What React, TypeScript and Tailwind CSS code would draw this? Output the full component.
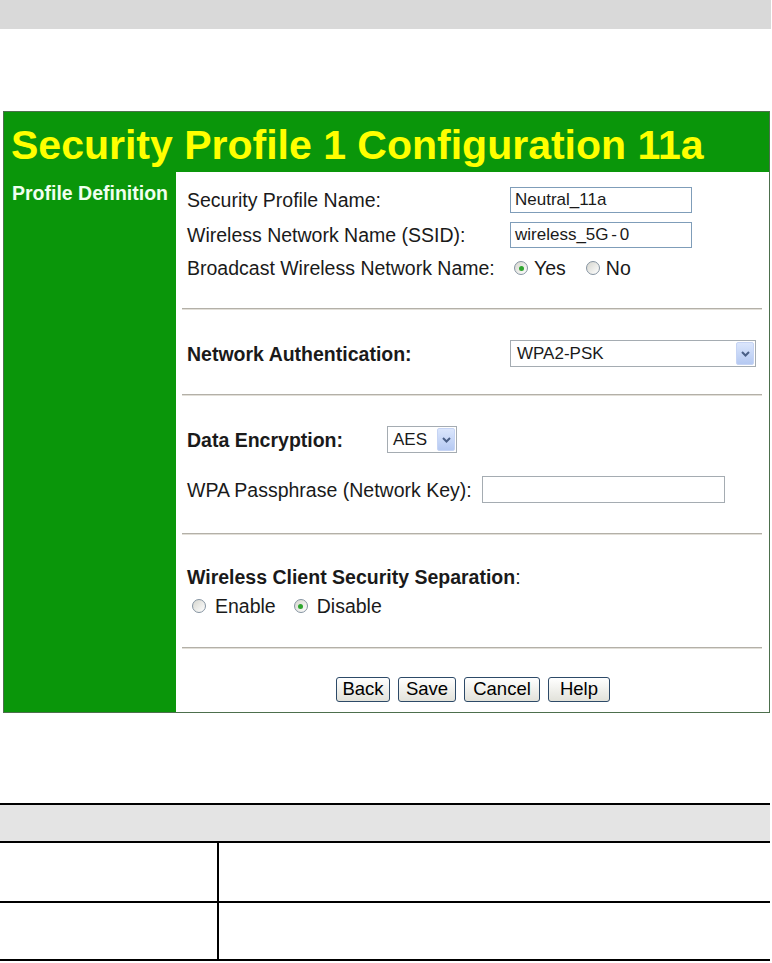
import React from "react";

const Radio = ({ checked }: { checked?: boolean }) => (
  <span className="inline-flex h-[14px] w-[14px] shrink-0 items-center justify-center rounded-full border border-[#8593a1] bg-linear-to-br from-[#d6d6cf] to-white">
    {checked && <span className="h-[5px] w-[5px] rounded-full bg-[#2ea52e]" />}
  </span>
);

const Arrow = () => (
  <span className="flex h-full w-[18px] items-center justify-center rounded-[2px] border border-[#c6d4f4] bg-linear-to-b from-[#dbe6fc] to-[#b5c9f2]">
    <svg width="9" height="6" viewBox="0 0 9 6">
      <path d="M1 1 L4.5 4.5 L8 1" stroke="#4a5f86" strokeWidth="2" fill="none" />
    </svg>
  </span>
);

const Hr = () => (
  <div className="h-[2px] border-t border-b border-t-[#b3b0a8] border-b-[#e2dfd8]" />
);

const Btn = ({ label, w }: { label: string; w: string }) => (
  <button
    className={`h-[25px] ${w} rounded-[3px] border border-[#2d4a68] bg-linear-to-b from-white to-[#e2e2da] text-[18.5px] leading-none text-black`}
  >
    {label}
  </button>
);

export default function App() {
  return (
    <div className="relative h-[963px] w-[772px] overflow-hidden bg-white font-['Liberation_Sans',Arial,sans-serif] text-[#1a1a1a]">
      <div className="h-[29px] w-[771px] bg-[#d9d9d9]" />
      <div className="h-[82px]" />
      <div className="ml-[3px] w-[767px] border border-[#4d6f4d] bg-[#0a960a]">
        <div className="pl-[7px] pt-[13px] pb-[6px] text-[41px] font-bold leading-[41px] whitespace-nowrap text-[#ffff00]">
          Security Profile 1 Configuration 11a
        </div>
        <div className="flex">
          <div className="w-[172px] shrink-0 pl-[8px] pt-[10px] text-[19.5px] font-bold leading-[22px] text-[#f0fff0]">
            Profile Definition
          </div>
          <div className="flex-1 bg-white pl-[6px] pr-[7px] text-[19.5px] leading-[22px]">
            {/* section 1 */}
            <div className="pl-[5px] pt-[15px]">
              <div className="flex h-[26px] items-center">
                <span className="w-[323px] shrink-0">Security Profile Name:</span>
                <div className="flex h-[26px] w-[182px] items-center border border-[#7f9db9] pl-[4px] text-[17px]">
                  Neutral_11a
                </div>
              </div>
              <div className="mt-[9px] flex h-[26px] items-center">
                <span className="w-[323px] shrink-0">Wireless Network Name (SSID):</span>
                <div className="flex h-[26px] w-[182px] items-center border border-[#7f9db9] pl-[4px] text-[17px] [word-spacing:-2px]">
                  wireless_5G - 0
                </div>
              </div>
              <div className="mt-[7px] flex h-[26px] items-center">
                <span className="w-[323px] shrink-0 whitespace-nowrap">Broadcast Wireless Network Name:</span>
                <span className="ml-[4px] flex items-center gap-[6px]">
                  <Radio checked />
                  <span>Yes</span>
                </span>
                <span className="ml-[20px] flex items-center gap-[6px]">
                  <Radio />
                  <span>No</span>
                </span>
              </div>
            </div>
            <div className="mt-[27px]">
              <Hr />
            </div>
            {/* section 2 */}
            <div className="pl-[5px] pt-[30px]">
              <div className="flex h-[27px] items-center">
                <span className="w-[323px] shrink-0 font-bold">Network Authentication:</span>
                <div className="flex h-[27px] w-[246px] items-center border border-[#a5acb2] p-[1px] pl-[6px] text-[17px]">
                  <span className="flex-1">WPA2-PSK</span>
                  <Arrow />
                </div>
              </div>
            </div>
            <div className="mt-[27px]">
              <Hr />
            </div>
            {/* section 3 */}
            <div className="pl-[5px] pt-[30px]">
              <div className="flex h-[27px] items-center">
                <span className="w-[200px] shrink-0 font-bold">Data Encryption:</span>
                <div className="flex h-[27px] w-[70px] items-center border border-[#a5acb2] p-[1px] pl-[5px] text-[17px]">
                  <span className="flex-1">AES</span>
                  <Arrow />
                </div>
              </div>
              <div className="mt-[23px] flex h-[27px] items-center">
                <span className="w-[295px] shrink-0 whitespace-nowrap">WPA Passphrase (Network Key):</span>
                <div className="h-[27px] w-[243px] border border-[#a5acb2]" />
              </div>
            </div>
            <div className="mt-[30px]">
              <Hr />
            </div>
            {/* section 4 */}
            <div className="pl-[5px] pt-[31px]">
              <div className="h-[22px]">
                <span className="font-bold">Wireless Client Security Separation</span>:
              </div>
              <div className="mt-[7px] flex h-[22px] items-center">
                <span className="ml-[5px] flex items-center gap-[9px]">
                  <Radio />
                  <span>Enable</span>
                </span>
                <span className="ml-[18px] flex items-center gap-[9px]">
                  <Radio checked />
                  <span>Disable</span>
                </span>
              </div>
            </div>
            <div className="mt-[30px]">
              <Hr />
            </div>
            <div className="flex justify-center gap-[8px] pt-[28px] pb-[10px] pl-[2px]">
              <Btn label="Back" w="w-[54px]" />
              <Btn label="Save" w="w-[58px]" />
              <Btn label="Cancel" w="w-[76px]" />
              <Btn label="Help" w="w-[62px]" />
            </div>
          </div>
        </div>
      </div>
      <div className="h-[90px]" />
      <div className="w-[770px] border-t-2 border-black">
        <div className="h-[36px] bg-[#e4e4e4]" />
        <div className="flex h-[60px] border-t-2 border-black">
          <div className="w-[219px] border-r-2 border-black" />
          <div className="flex-1" />
        </div>
        <div className="flex h-[60px] border-t-2 border-b-2 border-black">
          <div className="w-[219px] border-r-2 border-black" />
          <div className="flex-1" />
        </div>
      </div>
    </div>
  );
}
